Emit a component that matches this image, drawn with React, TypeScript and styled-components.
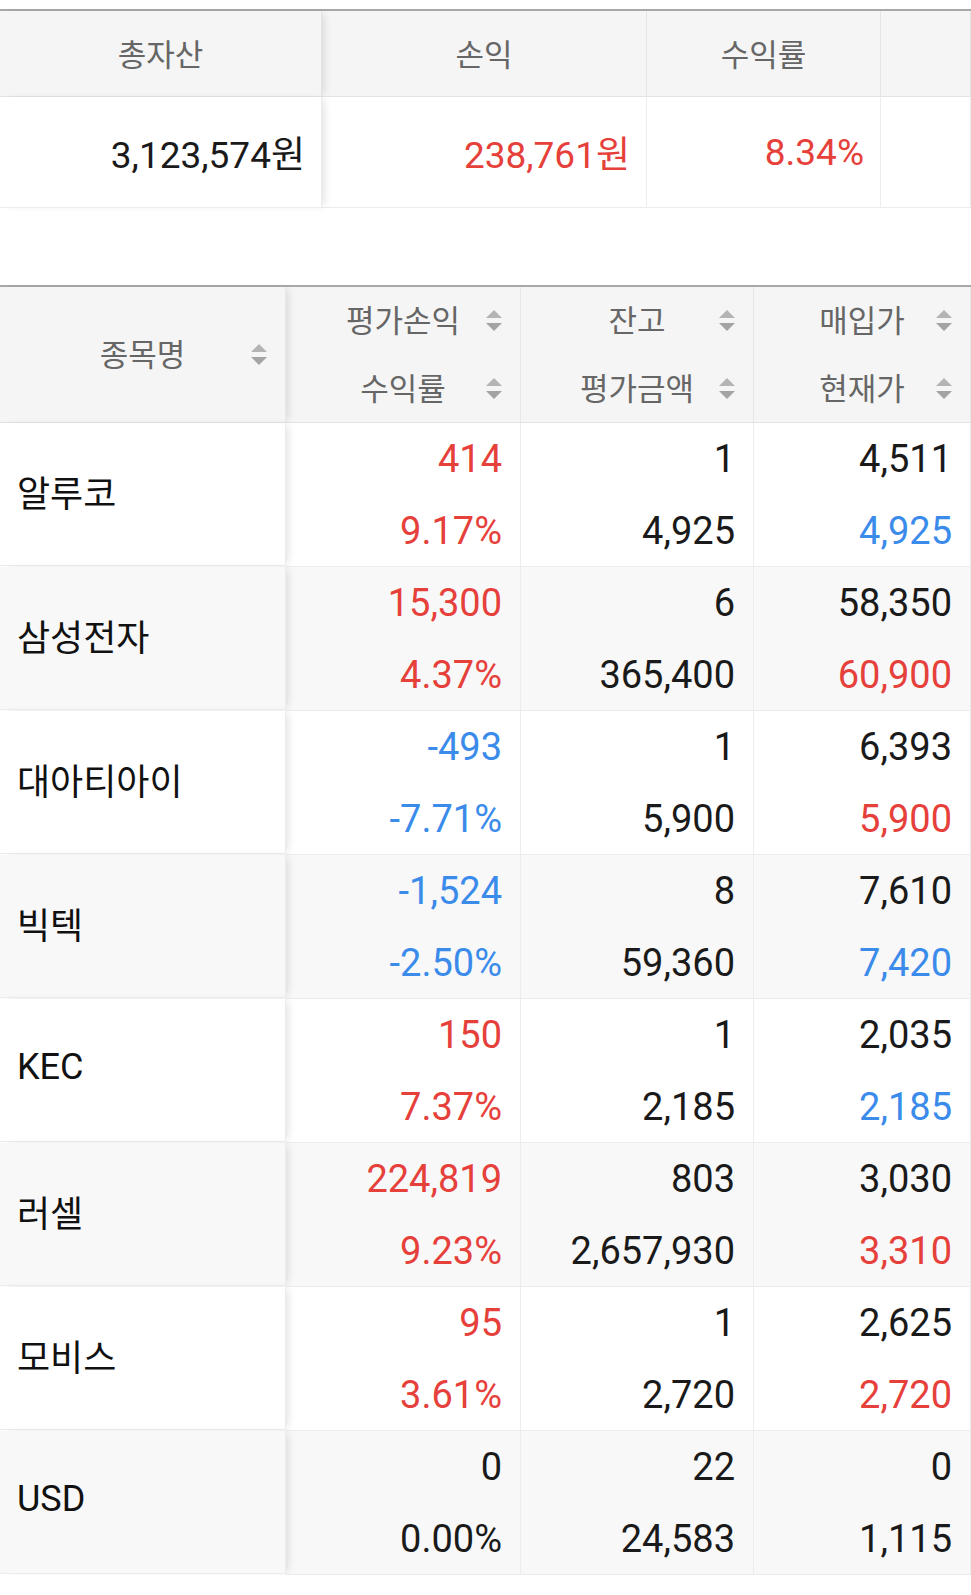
import styled, { createGlobalStyle } from "styled-components";

const GlobalStyle = createGlobalStyle`
  html, body {
    margin: 0;
    padding: 0;
    background: #fff;
  }
  body {
    font-family: Roboto, "Noto Sans CJK KR", sans-serif;
    color: #1a1a1a;
  }
`;

const RED = "#e6403b";
const BLUE = "#3b8beb";

type Tone = "plain" | "up" | "down";

const toneColor = (t?: Tone) => (t === "up" ? RED : t === "down" ? BLUE : "#1a1a1a");

const stickyShadow = `box-shadow: 5px 0 8px -3px rgba(0,0,0,0.12); z-index: 1;`;

const Page = styled.div`
  width: 971px;
  padding-top: 9px;
`;

const Summary = styled.div`
  display: grid;
  grid-template-columns: 322px 325px 234px 1fr;
  grid-template-rows: 86px 111px;
  border-top: 2px solid #a8a8a8;
`;

const SumHead = styled.div<{ $first?: boolean }>`
  position: relative;
  display: flex;
  align-items: center;
  justify-content: center;
  padding-bottom: 3px;
  background: #f5f5f5;
  border-bottom: 1px solid #e4e4e4;
  border-right: 1px solid #e4e4e4;
  font-size: 31px;
  color: #666;
  ${(p) => p.$first && stickyShadow}
`;

const SumCell = styled.div<{ $tone?: Tone; $first?: boolean }>`
  position: relative;
  display: flex;
  align-items: center;
  justify-content: flex-end;
  padding-right: 16px;
  background: #fff;
  border-bottom: 1px solid #ececec;
  border-right: 1px solid #ececec;
  font-size: 37px;
  color: ${(p) => toneColor(p.$tone)};
  ${(p) => p.$first && stickyShadow}
`;

const Holdings = styled.div`
  margin-top: 77px;
  display: grid;
  grid-template-columns: 286px 235px 233px 1fr;
  border-top: 2px solid #a8a8a8;
`;

const HeadCell = styled.div<{ $first?: boolean }>`
  position: relative;
  height: 135px;
  display: flex;
  flex-direction: column;
  justify-content: center;
  background: #f5f5f5;
  border-bottom: 1px solid #e2e2e2;
  border-right: 1px solid #e6e6e6;
  font-size: 31px;
  color: #666;
  ${(p) => p.$first && stickyShadow}
`;

const HeadLine = styled.div`
  height: 68px;
  flex-shrink: 0;
  display: grid;
  grid-template-columns: 1fr auto 1fr;
  align-items: center;
  padding: 0 18px;
`;

const HeadText = styled.span`
  grid-column: 2;
  margin-top: -4px;
`;

const SortSlot = styled.span`
  grid-column: 3;
  justify-self: end;
  display: flex;
`;

const RowCell = styled.div<{ $alt?: boolean; $first?: boolean }>`
  position: relative;
  height: 143px;
  background: ${(p) => (p.$alt ? "#f8f8f8" : "#fff")};
  border-bottom: 1px solid #ececec;
  border-right: 1px solid #ececec;
  ${(p) => p.$first && stickyShadow}
`;

const NameCell = styled(RowCell)`
  display: flex;
  align-items: center;
  padding-left: 17px;
  padding-bottom: 6px;
  box-sizing: border-box;
  font-size: 36px;
  color: #111;
`;

const NumCell = styled(RowCell)`
  display: grid;
  grid-template-rows: 72px 71px;
  padding-right: 18px;
`;

const Num = styled.div<{ $tone?: Tone }>`
  display: flex;
  align-items: center;
  justify-content: flex-end;
  font-size: 38px;
  color: ${(p) => toneColor(p.$tone)};
`;

const SortIcon = () => (
  <svg width="16" height="21" viewBox="0 0 16 21">
    <polygon points="8,0 16,8 0,8" fill="#b4b4b4" />
    <polygon points="0,13 16,13 8,21" fill="#a4a4a4" />
  </svg>
);

type Pair = [string, Tone];
type Row = { name: string; cols: [Pair, Pair][] };

const rows: Row[] = [
  { name: "알루코", cols: [[["414", "up"], ["9.17%", "up"]], [["1", "plain"], ["4,925", "plain"]], [["4,511", "plain"], ["4,925", "down"]]] },
  { name: "삼성전자", cols: [[["15,300", "up"], ["4.37%", "up"]], [["6", "plain"], ["365,400", "plain"]], [["58,350", "plain"], ["60,900", "up"]]] },
  { name: "대아티아이", cols: [[["-493", "down"], ["-7.71%", "down"]], [["1", "plain"], ["5,900", "plain"]], [["6,393", "plain"], ["5,900", "up"]]] },
  { name: "빅텍", cols: [[["-1,524", "down"], ["-2.50%", "down"]], [["8", "plain"], ["59,360", "plain"]], [["7,610", "plain"], ["7,420", "down"]]] },
  { name: "KEC", cols: [[["150", "up"], ["7.37%", "up"]], [["1", "plain"], ["2,185", "plain"]], [["2,035", "plain"], ["2,185", "down"]]] },
  { name: "러셀", cols: [[["224,819", "up"], ["9.23%", "up"]], [["803", "plain"], ["2,657,930", "plain"]], [["3,030", "plain"], ["3,310", "up"]]] },
  { name: "모비스", cols: [[["95", "up"], ["3.61%", "up"]], [["1", "plain"], ["2,720", "plain"]], [["2,625", "plain"], ["2,720", "up"]]] },
  { name: "USD", cols: [[["0", "plain"], ["0.00%", "plain"]], [["22", "plain"], ["24,583", "plain"]], [["0", "plain"], ["1,115", "plain"]]] },
];

const heads: [string, string][] = [
  ["평가손익", "수익률"],
  ["잔고", "평가금액"],
  ["매입가", "현재가"],
];

export default function App() {
  return (
    <>
      <GlobalStyle />
      <Page>
        <Summary>
          <SumHead $first>총자산</SumHead>
          <SumHead>손익</SumHead>
          <SumHead>수익률</SumHead>
          <SumHead />
          <SumCell $first>3,123,574원</SumCell>
          <SumCell $tone="up">238,761원</SumCell>
          <SumCell $tone="up">8.34%</SumCell>
          <SumCell />
        </Summary>

        <Holdings>
          <HeadCell $first>
            <HeadLine>
              <HeadText>종목명</HeadText>
              <SortSlot>
                <SortIcon />
              </SortSlot>
            </HeadLine>
          </HeadCell>
          {heads.map(([a, b]) => (
            <HeadCell key={a}>
              <HeadLine>
                <HeadText>{a}</HeadText>
                <SortSlot>
                  <SortIcon />
                </SortSlot>
              </HeadLine>
              <HeadLine>
                <HeadText>{b}</HeadText>
                <SortSlot>
                  <SortIcon />
                </SortSlot>
              </HeadLine>
            </HeadCell>
          ))}

          {rows.map((r, i) => (
            <>
              <NameCell key={r.name} $first $alt={i % 2 === 1}>
                {r.name}
              </NameCell>
              {r.cols.map(([top, bottom], j) => (
                <NumCell key={r.name + j} $alt={i % 2 === 1}>
                  <Num $tone={top[1]}>{top[0]}</Num>
                  <Num $tone={bottom[1]}>{bottom[0]}</Num>
                </NumCell>
              ))}
            </>
          ))}
        </Holdings>
      </Page>
    </>
  );
}
